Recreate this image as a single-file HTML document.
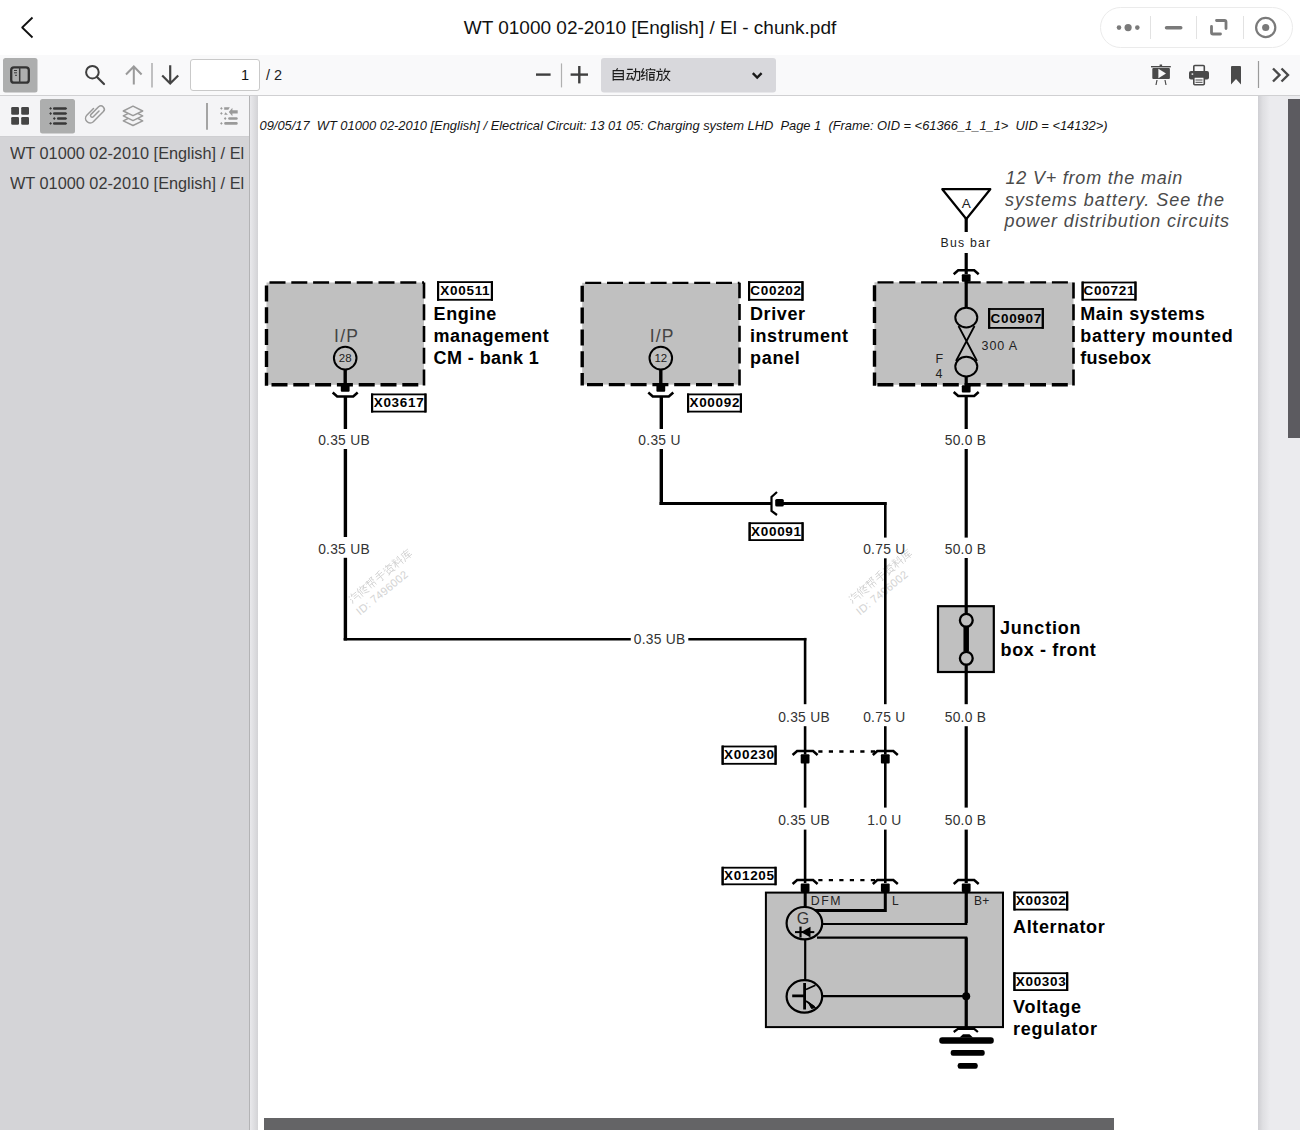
<!DOCTYPE html>
<html><head><meta charset="utf-8">
<style>
*{margin:0;padding:0;box-sizing:border-box}
html,body{width:1300px;height:1130px;overflow:hidden;background:#fff;font-family:"Liberation Sans",sans-serif}
.abs{position:absolute}
#topbar{left:0;top:0;width:1300px;height:55px;background:#fff}
#title{left:0;top:0;width:1300px;height:55px;line-height:55px;text-align:center;font-size:19px;color:#111}
#toolbar{left:0;top:55px;width:1300px;height:41px;background:#f9f9fa;border-bottom:1px solid #d0d0d2}
#sidebar{left:0;top:96px;width:250px;height:1034px;background:#d4d4d7}
#sbtool{left:0;top:96px;width:249px;height:41px;background:#f4f4f6;border-bottom:1px solid #cfcfd2}
#sbborder{left:249px;top:96px;width:1px;height:1034px;background:#b3b3b5}
#viewer{left:250px;top:96px;width:1050px;height:1034px;background:#ebebee}
#lstrip{left:250px;top:96px;width:8px;height:1034px;background:linear-gradient(to right,#e9e9ec,#d3d3d6)}
#rstrip{left:1258px;top:96px;width:12px;height:1034px;background:linear-gradient(to right,#cfcfd3,#dfdfe2 40%,#ebebee)}
#page{left:258px;top:96px;width:1000px;height:1034px;background:#fff}
.outline{left:10px;font-size:16.3px;color:#3a3a3a;white-space:nowrap;width:234px;overflow:hidden}
</style></head><body>
<div class="abs" id="topbar"></div>
<div class="abs" id="title">WT 01000 02-2010 [English] / El - chunk.pdf</div>
<div class="abs" id="toolbar"></div>
<div class="abs" id="viewer"></div>
<div class="abs" id="lstrip"></div><div class="abs" id="rstrip"></div>
<div class="abs" id="page"></div>
<div class="abs" id="sidebar"></div>
<div class="abs" id="sbtool"></div>
<div class="abs" id="sbborder"></div>
<div class="abs outline" style="top:144px">WT 01000 02-2010 [English] / El</div>
<div class="abs outline" style="top:174px">WT 01000 02-2010 [English] / El</div>
<!-- UI icons svg -->
<svg class="abs" style="left:0;top:0" width="1300" height="140" viewBox="0 0 1300 140">
  <!-- back arrow -->
  <path d="M32.5 17.5 L22.2 27.5 L32.5 37.5" fill="none" stroke="#111" stroke-width="1.8" stroke-linejoin="round"/>
  <!-- capsule -->
  <rect x="1100.5" y="7.5" width="192" height="40" rx="20" fill="#fff" stroke="#ebebeb"/>
  <line x1="1150.5" y1="16" x2="1150.5" y2="39" stroke="#e2e2e2"/>
  <line x1="1196.5" y1="16" x2="1196.5" y2="39" stroke="#e2e2e2"/>
  <line x1="1243.5" y1="16" x2="1243.5" y2="39" stroke="#e2e2e2"/>
  <circle cx="1119" cy="27.6" r="2.3" fill="#7a7a7a"/>
  <circle cx="1128.1" cy="27.6" r="3.6" fill="#7a7a7a"/>
  <circle cx="1137.3" cy="27.6" r="2.3" fill="#7a7a7a"/>
  <line x1="1166.5" y1="27.7" x2="1180.8" y2="27.7" stroke="#7a7a7a" stroke-width="3.4" stroke-linecap="round"/>
  <path d="M1216.5 20.5 H1224.5 a1.5 1.5 0 0 1 1.5 1.5 V28.5 M1211.5 26.5 V32.5 a1.5 1.5 0 0 0 1.5 1.5 H1220.5" fill="none" stroke="#7a7a7a" stroke-width="2.8" stroke-linecap="round"/>
  <circle cx="1265.7" cy="27.5" r="9.6" fill="none" stroke="#7a7a7a" stroke-width="2.2"/>
  <circle cx="1265.7" cy="27.5" r="3.6" fill="#7a7a7a"/>
  <!-- sidebar toggle -->
  <rect x="3" y="58" width="34.5" height="34.5" rx="2.5" fill="#adaeae"/>
  <rect x="11.2" y="67.3" width="17.6" height="15.4" rx="2.8" fill="none" stroke="#333" stroke-width="2.3"/>
  <line x1="19.7" y1="67" x2="19.7" y2="83" stroke="#3a3a3a" stroke-width="1.5"/>
  <line x1="14" y1="70.5" x2="17" y2="70.5" stroke="#3a3a3a" stroke-width="1"/>
  <line x1="14" y1="72.8" x2="17" y2="72.8" stroke="#3a3a3a" stroke-width="1"/>
  <line x1="15" y1="75.3" x2="17" y2="75.3" stroke="#3a3a3a" stroke-width="1"/>
  <!-- search -->
  <circle cx="92.4" cy="72.2" r="6.3" fill="none" stroke="#3f3f3f" stroke-width="2"/>
  <line x1="97" y1="77" x2="104" y2="84" stroke="#3f3f3f" stroke-width="2.2" stroke-linecap="round"/>
  <!-- up arrow -->
  <path d="M133.8 84.5 V66.5 M126 74.5 L133.8 66.5 L141.6 74.5" fill="none" stroke="#9a9a9a" stroke-width="2"/>
  <line x1="152" y1="63" x2="152" y2="87.5" stroke="#a8a8a8" stroke-width="1.4"/>
  <path d="M170.2 65.2 V83.5 M162.2 75.5 L170.2 83.5 L178.2 75.5" fill="none" stroke="#444" stroke-width="2.2"/>
  <!-- page input -->
  <rect x="190.5" y="59.5" width="69" height="31" rx="2.5" fill="#fff" stroke="#c9c9c9"/>
  <text x="249" y="80" font-size="14.5" text-anchor="end" fill="#111">1</text>
  <text x="266" y="80" font-size="14.5" fill="#222">/ 2</text>
  <!-- zoom -->
  <line x1="536" y1="74.6" x2="550.6" y2="74.6" stroke="#3f3f3f" stroke-width="2.4"/>
  <line x1="561.5" y1="63.4" x2="561.5" y2="87.4" stroke="#b0b0b0" stroke-width="1.2"/>
  <line x1="570.6" y1="74.6" x2="588" y2="74.6" stroke="#3f3f3f" stroke-width="2.4"/>
  <line x1="579.3" y1="66" x2="579.3" y2="83.4" stroke="#3f3f3f" stroke-width="2.4"/>
  <rect x="601" y="58" width="175" height="34.6" rx="3" fill="#d8d8dc"/>
  <g fill="none" stroke="#1c1c1c" stroke-width="1.15" stroke-linecap="butt" stroke-linejoin="miter">
   <path d="M617.6 68.3 L616.5 70.2 M613.2 80.8 V70.6 H623.3 V80.5 M613.2 73.6 H623.3 M613.2 76.6 H623.3 M613.2 79.6 H623.3"/>
   <path d="M627.2 69.4 H632.8 M626.6 73.5 H633.3 M629.4 73.6 L627 79.2 L633.2 78.5 M631.1 75.8 L633 79.9 M635.6 68.2 V73.5 Q635.3 78.5 632.7 80.6 M633.4 71.6 H639.6 V79.2 Q639.6 80.4 638.4 80.4 H636.6"/>
   <path d="M643.6 68.3 L641.6 72.1 H644.1 L641.4 76.3 L645.8 75.2 M641.3 79.6 L644.6 78.3 M650.3 68.2 L650.6 69.4 M646.4 71 V69.7 H654.8 V71 M647.5 71.3 L645.9 73.8 M646.9 73 V80.8 M649.2 72.5 H655 M649.7 80.6 V74.3 H653.9 V80.6 M649.7 77.3 H653.9 M649.7 80.1 H653.9"/>
   <path d="M660 68.6 L660.6 69.9 M656.3 71.3 H662.6 M658.6 71.3 V75.5 Q658.2 78.8 656.4 80.7 M658.6 74.3 H661.9 V79.4 Q661.9 80.3 660.9 80.3 H659.4 M665.4 68.4 L663.6 73.6 M664.2 71.3 H670.3 M668.6 71.4 Q667 77.5 663.1 80.6 M665 75.3 Q667.2 78.8 670.1 80.7"/>
  </g>
  <path d="M752.8 73.2 L757.2 77.6 L761.6 73.2" fill="none" stroke="#1a1a1a" stroke-width="2.4"/>
  <!-- right icons -->
  <rect x="1151" y="66" width="19.8" height="1.4" fill="#4a4a4a"/>
  <rect x="1159.6" y="64.5" width="2.5" height="2" fill="#4a4a4a"/>
  <rect x="1152.3" y="68" width="17.6" height="11" rx="1" fill="#4a4a4a"/>
  <path d="M1158.4 68.8 L1166 73.5 L1158.4 78.2 Z" fill="#f9f9fa"/>
  <path d="M1157 80 L1156 85 M1165 80 L1166 85" stroke="#4a4a4a" stroke-width="1.2"/>
  <rect x="1193.8" y="65.5" width="10.5" height="7" rx="1" fill="none" stroke="#4a4a4a" stroke-width="1.6"/>
  <rect x="1189" y="71" width="20" height="8.6" rx="2" fill="#4a4a4a"/>
  <rect x="1193.8" y="77" width="10.5" height="7.8" rx="1" fill="#f9f9fa" stroke="#4a4a4a" stroke-width="1.6"/>
  <rect x="1191.6" y="73.4" width="1.6" height="1.4" fill="#f9f9fa"/>
  <line x1="1195.5" y1="80" x2="1202.5" y2="80" stroke="#4a4a4a" stroke-width="1"/>
  <line x1="1195.5" y1="82.3" x2="1202.5" y2="82.3" stroke="#4a4a4a" stroke-width="1"/>
  <path d="M1231 67 a1 1 0 0 1 1 -1 H1240 a1 1 0 0 1 1 1 V84.5 L1236 79 L1231 84.5 Z" fill="#4a4a4a"/>
  <line x1="1258.5" y1="61" x2="1258.5" y2="88" stroke="#9a9a9a" stroke-width="1.2"/>
  <path d="M1273 68.5 L1279.5 75 L1273 81.5 M1281.5 68.5 L1288 75 L1281.5 81.5" fill="none" stroke="#4a4a4a" stroke-width="2.4"/>
  <!-- sidebar toolbar -->
  <rect x="40" y="99" width="35" height="34.6" rx="2.5" fill="#adaeae"/>
  <rect x="11.2" y="107" width="7.8" height="7.8" rx="1.3" fill="#444"/>
  <rect x="21.2" y="107" width="7.8" height="7.8" rx="1.3" fill="#444"/>
  <rect x="11.2" y="117" width="7.8" height="7.8" rx="1.3" fill="#444"/>
  <rect x="21.2" y="117" width="7.8" height="7.8" rx="1.3" fill="#444"/>
  <g fill="#383838">
   <path d="M50.6 107 l1.4 1.4 l-1.4 1.4 l-1.4 -1.4 Z"/><path d="M50.6 112.1 l1.4 1.4 l-1.4 1.4 l-1.4 -1.4 Z"/><path d="M54.3 117.1 l1.4 1.4 l-1.4 1.4 l-1.4 -1.4 Z"/><path d="M50.6 122 l1.4 1.4 l-1.4 1.4 l-1.4 -1.4 Z"/>
   <path d="M54.2 107.2 H66 L67.2 108.4 L66 109.7 H54.2 a1.25 1.25 0 0 1 0 -2.5 Z"/>
   <path d="M54.2 112.3 H66 L67.2 113.5 L66 114.8 H54.2 a1.25 1.25 0 0 1 0 -2.5 Z"/>
   <path d="M58.2 117.3 H66 L67.2 118.5 L66 119.8 H58.2 a1.25 1.25 0 0 1 0 -2.5 Z"/>
   <path d="M54.2 122.2 H66 L67.2 123.4 L66 124.7 H54.2 a1.25 1.25 0 0 1 0 -2.5 Z"/>
  </g>
  <path d="M93.5 108.5 L86.8 115.2 a4.6 4.6 0 0 0 6.5 6.5 L103.4 111.6 a3.4 3.4 0 0 0 -4.8 -4.8 L91 114.4 a1.6 1.6 0 0 0 2.3 2.3 L99 111" fill="none" stroke="#9a9a9a" stroke-width="1.5" stroke-linecap="round"/>
  <g fill="#f4f4f6" stroke="#9a9a9a" stroke-width="1.5" stroke-linejoin="round">
   <path d="M133 116 L142.7 120.8 L133 125.5 L123.3 120.8 Z"/>
   <path d="M133 111.1 L142.7 115.9 L133 120.6 L123.3 115.9 Z"/>
   <path d="M133 106.2 L142.7 111 L133 115.7 L123.3 111 Z"/>
  </g>
  <line x1="207" y1="103" x2="207" y2="129.7" stroke="#a0a0a0" stroke-width="1.9"/>
  <g fill="#9a9a9a">
   <path d="M221.4 107 l1.3 1.4 l-1.3 1.4 l-1.3 -1.4 Z"/><path d="M221.4 112 l1.3 1.4 l-1.3 1.4 l-1.3 -1.4 Z"/><path d="M225.2 117.1 l1.3 1.4 l-1.3 1.4 l-1.3 -1.4 Z"/><path d="M221.4 122 l1.3 1.4 l-1.3 1.4 l-1.3 -1.4 Z"/>
   <path d="M224.2 107.2 H229.8 L228.3 109.8 H224.2 Z"/>
   <path d="M224.2 114.7 L225.5 112.2 L227.9 114.7 Z"/>
   <path d="M228.8 112 L232.4 107.7 V110.3 H237.7 V113.6 H232.4 V116.3 Z"/>
   <rect x="228.2" y="117.2" width="9.5" height="2.6" rx="1.2"/>
   <rect x="224.2" y="122.1" width="13.5" height="2.6" rx="1.2"/>
  </g>
</svg>
<!-- DIAGRAM -->
<svg class="abs" style="left:0;top:0" width="1300" height="1130" viewBox="0 0 1300 1130" font-family="'Liberation Sans', sans-serif">
<text x="259.5" y="129.7" font-size="12.9" text-anchor="start" font-weight="normal" font-style="italic" letter-spacing="0" fill="#151515" textLength="848" lengthAdjust="spacing">09/05/17&#160; WT 01000 02-2010 [English] / Electrical Circuit: 13 01 05: Charging system LHD&#160; Page 1&#160; (Frame: OID = &lt;61366_1_1_1&gt;&#160; UID = &lt;14132&gt;)</text>
<g transform="translate(353.5 604.5) rotate(-39.3)"><g fill="none" stroke="#d3d3d3" stroke-width="0.9"><path transform="translate(0.0 0)" d="M1 -9 L2 -8 M0.5 -6 L1.5 -5 M0 -1 L2 -4 M5 -10 L3.5 -7 M4 -8 H10 M5 -6 H9 M4 -4 H9.5 V0"/><path transform="translate(11.2 0)" d="M2 -10 L0 -6 M1.2 -7 V0 M3 -8 V-2 M5 -10 L4 -7 M4.5 -8.5 H10 M9 -8.5 L5 -5 M6 -7 L10 -5 M5 -4 L9 -3 M4.5 -2 L9.5 0"/><path transform="translate(22.4 0)" d="M0 -9 H5 M0 -7.5 H5 M2.5 -10 L2 -5 M6 -10 V-5 M6 -10 H9 L7.5 -7.5 L9 -6 M2 -5 V-1 M2 -4.5 H8 V-1 M5 -5 V0"/><path transform="translate(33.6 0)" d="M8 -10 L2 -9 M1 -7 H9 M0 -4.5 H10 M5 -9 V0 L3.5 -0.5"/><path transform="translate(44.8 0)" d="M0.5 -9 L1.5 -8 M0 -6 L2 -7 M5 -10 L3.5 -8 M4 -8.5 H9.5 M7 -8.5 L4 -6 M7 -7.5 L10 -6 M2 -5 H8 V-1.5 H2 Z M5 -4 V-2 M4 -1.5 L1 0 M6 -1.5 L9.5 0"/><path transform="translate(56.0 0)" d="M1 -9.5 L1.5 -8.5 M4 -9.5 L3.5 -8.5 M0 -7 H5 M2.5 -10 V0 M2.5 -6.5 L0 -2 M2.5 -6.5 L5 -3 M6.5 -9 L7.5 -8 M6 -7 L7 -6 M5.5 -3.5 L10 -4.5 M8.5 -10 V0"/><path transform="translate(67.2 0)" d="M5 -10 L5.5 -9 M1 -8.5 H10 M1.5 -8.5 V-3 L0 0 M3 -6.5 H9 M5 -7.5 L3.5 -4 H9 M2.5 -2 H10 M6.5 -5.5 V0"/></g><text x="-2" y="12.8" font-size="11" fill="#d3d3d3" letter-spacing="0.3">ID: 7496002</text></g>
<g transform="translate(853.5 604.5) rotate(-39.3)"><g fill="none" stroke="#d3d3d3" stroke-width="0.9"><path transform="translate(0.0 0)" d="M1 -9 L2 -8 M0.5 -6 L1.5 -5 M0 -1 L2 -4 M5 -10 L3.5 -7 M4 -8 H10 M5 -6 H9 M4 -4 H9.5 V0"/><path transform="translate(11.2 0)" d="M2 -10 L0 -6 M1.2 -7 V0 M3 -8 V-2 M5 -10 L4 -7 M4.5 -8.5 H10 M9 -8.5 L5 -5 M6 -7 L10 -5 M5 -4 L9 -3 M4.5 -2 L9.5 0"/><path transform="translate(22.4 0)" d="M0 -9 H5 M0 -7.5 H5 M2.5 -10 L2 -5 M6 -10 V-5 M6 -10 H9 L7.5 -7.5 L9 -6 M2 -5 V-1 M2 -4.5 H8 V-1 M5 -5 V0"/><path transform="translate(33.6 0)" d="M8 -10 L2 -9 M1 -7 H9 M0 -4.5 H10 M5 -9 V0 L3.5 -0.5"/><path transform="translate(44.8 0)" d="M0.5 -9 L1.5 -8 M0 -6 L2 -7 M5 -10 L3.5 -8 M4 -8.5 H9.5 M7 -8.5 L4 -6 M7 -7.5 L10 -6 M2 -5 H8 V-1.5 H2 Z M5 -4 V-2 M4 -1.5 L1 0 M6 -1.5 L9.5 0"/><path transform="translate(56.0 0)" d="M1 -9.5 L1.5 -8.5 M4 -9.5 L3.5 -8.5 M0 -7 H5 M2.5 -10 V0 M2.5 -6.5 L0 -2 M2.5 -6.5 L5 -3 M6.5 -9 L7.5 -8 M6 -7 L7 -6 M5.5 -3.5 L10 -4.5 M8.5 -10 V0"/><path transform="translate(67.2 0)" d="M5 -10 L5.5 -9 M1 -8.5 H10 M1.5 -8.5 V-3 L0 0 M3 -6.5 H9 M5 -7.5 L3.5 -4 H9 M2.5 -2 H10 M6.5 -5.5 V0"/></g><text x="-2" y="12.8" font-size="11" fill="#d3d3d3" letter-spacing="0.3">ID: 7496002</text></g>
<rect x="266.5" y="282.5" width="157.5" height="102.30000000000001" fill="#c0c0c0"/>
<path d="M269.5 282.5 H424" stroke="#000" stroke-width="2.3" stroke-dasharray="16 5.8"/>
<path d="M266.5 285.5 V385.8" stroke="#000" stroke-width="3.4" stroke-dasharray="16 5.8"/>
<path d="M424 385.6 V282.5" stroke="#000" stroke-width="2.6" stroke-dasharray="16 5.8"/>
<path d="M422.5 384.8 H266.5" stroke="#000" stroke-width="3.4" stroke-dasharray="16 5.8" stroke-dashoffset="-4.2"/>
<rect x="582.2" y="282.8" width="157.29999999999995" height="101.80000000000001" fill="#c0c0c0"/>
<path d="M585.2 282.8 H739.5" stroke="#000" stroke-width="2.3" stroke-dasharray="16 5.8"/>
<path d="M582.2 285.8 V385.6" stroke="#000" stroke-width="3.4" stroke-dasharray="16 5.8"/>
<path d="M739.5 385.40000000000003 V282.8" stroke="#000" stroke-width="2.6" stroke-dasharray="16 5.8"/>
<path d="M738.0 384.6 H582.2" stroke="#000" stroke-width="3.4" stroke-dasharray="16 5.8" stroke-dashoffset="-4.2"/>
<rect x="874.5" y="282.3" width="199.0" height="102.5" fill="#c0c0c0"/>
<path d="M877.5 282.3 H1073.5" stroke="#000" stroke-width="2.3" stroke-dasharray="16 5.8"/>
<path d="M874.5 285.3 V385.8" stroke="#000" stroke-width="3.4" stroke-dasharray="16 5.8"/>
<path d="M1073.5 385.6 V282.3" stroke="#000" stroke-width="2.6" stroke-dasharray="16 5.8"/>
<path d="M1072.0 384.8 H874.5" stroke="#000" stroke-width="3.4" stroke-dasharray="16 5.8" stroke-dashoffset="-4.2"/>
<rect x="437.9" y="282.09999999999997" width="54.2" height="17.7" fill="#fff" stroke="#000" stroke-width="1.8"/>
<path d="M438.1 281.2 V300.7 M491.9 281.2 V300.7" stroke="#000" stroke-width="2.2"/>
<text x="465.3" y="295.3" font-size="13.5" text-anchor="middle" font-weight="bold" font-style="normal" letter-spacing="0.7" fill="#000" >X00511</text>
<rect x="748.9" y="282.09999999999997" width="53.7" height="17.7" fill="#fff" stroke="#000" stroke-width="1.8"/>
<path d="M749.1 281.2 V300.7 M802.4 281.2 V300.7" stroke="#000" stroke-width="2.2"/>
<text x="776.05" y="295.3" font-size="13.5" text-anchor="middle" font-weight="bold" font-style="normal" letter-spacing="0.7" fill="#000" >C00202</text>
<rect x="1082.5" y="282.5" width="53.100000000000094" height="17.2" fill="#fff" stroke="#000" stroke-width="1.8"/>
<path d="M1082.6999999999998 281.6 V300.6 M1135.4 281.6 V300.6" stroke="#000" stroke-width="2.2"/>
<text x="1109.35" y="295.20000000000005" font-size="13.5" text-anchor="middle" font-weight="bold" font-style="normal" letter-spacing="0.7" fill="#000" >C00721</text>
<text x="433.6" y="320.0" font-size="18" text-anchor="start" font-weight="bold" font-style="normal" letter-spacing="0.54" fill="#000" >Engine</text>
<text x="433.6" y="341.75" font-size="18" text-anchor="start" font-weight="bold" font-style="normal" letter-spacing="0.467" fill="#000" >management</text>
<text x="433.6" y="363.5" font-size="18" text-anchor="start" font-weight="bold" font-style="normal" letter-spacing="0.42" fill="#000" >CM - bank 1</text>
<text x="750" y="320.0" font-size="18" text-anchor="start" font-weight="bold" font-style="normal" letter-spacing="0.6" fill="#000" >Driver</text>
<text x="750" y="341.75" font-size="18" text-anchor="start" font-weight="bold" font-style="normal" letter-spacing="0.556" fill="#000" >instrument</text>
<text x="750" y="363.5" font-size="18" text-anchor="start" font-weight="bold" font-style="normal" letter-spacing="0.7" fill="#000" >panel</text>
<text x="1080.3" y="320.0" font-size="18" text-anchor="start" font-weight="bold" font-style="normal" letter-spacing="0.573" fill="#000" >Main systems</text>
<text x="1080.3" y="341.75" font-size="18" text-anchor="start" font-weight="bold" font-style="normal" letter-spacing="0.814" fill="#000" >battery mounted</text>
<text x="1080.3" y="363.5" font-size="18" text-anchor="start" font-weight="bold" font-style="normal" letter-spacing="0.267" fill="#000" >fusebox</text>
<text x="346.59999999999997" y="341.7" font-size="17.5" text-anchor="middle" font-weight="normal" font-style="normal" letter-spacing="1.2" fill="#444" >I/P</text>
<circle cx="345.2" cy="358.1" r="11.3" fill="none" stroke="#000" stroke-width="2"/>
<text x="345.2" y="361.8" font-size="11.5" text-anchor="middle" font-weight="normal" font-style="normal" letter-spacing="0" fill="#222" >28</text>
<line x1="345.2" y1="369.4" x2="345.2" y2="384" stroke="#000" stroke-width="3.4" />
<rect x="340.8" y="384.4" width="8.8" height="7.400000000000034" rx="1" fill="#000"/>
<path d="M332.7 392.5 L337.2 396.5 H353.2 L357.7 392.5" fill="none" stroke="#000" stroke-width="2.5"/>
<text x="662.1999999999999" y="341.7" font-size="17.5" text-anchor="middle" font-weight="normal" font-style="normal" letter-spacing="1.2" fill="#444" >I/P</text>
<circle cx="660.8" cy="358.1" r="11.3" fill="none" stroke="#000" stroke-width="2"/>
<text x="660.8" y="361.8" font-size="11.5" text-anchor="middle" font-weight="normal" font-style="normal" letter-spacing="0" fill="#222" >12</text>
<line x1="660.8" y1="369.4" x2="660.8" y2="384" stroke="#000" stroke-width="3.4" />
<rect x="656.4" y="384.4" width="8.8" height="7.400000000000034" rx="1" fill="#000"/>
<path d="M648.3 392.5 L652.8 396.5 H668.8 L673.3 392.5" fill="none" stroke="#000" stroke-width="2.5"/>
<rect x="371.9" y="394.4" width="53.7" height="17.2" fill="#fff" stroke="#000" stroke-width="1.8"/>
<path d="M372.1 393.5 V412.5 M425.4 393.5 V412.5" stroke="#000" stroke-width="2.2"/>
<text x="399.05" y="407.1" font-size="13.5" text-anchor="middle" font-weight="bold" font-style="normal" letter-spacing="0.7" fill="#000" >X03617</text>
<rect x="687.9" y="394.4" width="53.2" height="17.2" fill="#fff" stroke="#000" stroke-width="1.8"/>
<path d="M688.1 393.5 V412.5 M740.9 393.5 V412.5" stroke="#000" stroke-width="2.2"/>
<text x="714.8" y="407.1" font-size="13.5" text-anchor="middle" font-weight="bold" font-style="normal" letter-spacing="0.7" fill="#000" >X00092</text>
<line x1="345.4" y1="397" x2="345.4" y2="429" stroke="#000" stroke-width="3.4" />
<text x="344" y="444.5" font-size="13.8" text-anchor="middle" font-weight="normal" font-style="normal" letter-spacing="0.27" fill="#333" >0.35 UB</text>
<line x1="345.4" y1="449" x2="345.4" y2="537" stroke="#000" stroke-width="3.4" />
<text x="344" y="553.6" font-size="13.8" text-anchor="middle" font-weight="normal" font-style="normal" letter-spacing="0.27" fill="#333" >0.35 UB</text>
<line x1="345.4" y1="557.8" x2="345.4" y2="640.5" stroke="#000" stroke-width="3.4" />
<line x1="343.7" y1="639.2" x2="630.8" y2="639.2" stroke="#000" stroke-width="2.6" />
<text x="659.7" y="643.8" font-size="13.8" text-anchor="middle" font-weight="normal" font-style="normal" letter-spacing="0.27" fill="#333" >0.35 UB</text>
<line x1="688.3" y1="639.2" x2="806.4" y2="639.2" stroke="#000" stroke-width="2.6" />
<line x1="805.1" y1="637.9" x2="805.1" y2="704.2" stroke="#000" stroke-width="2.6" />
<text x="804" y="721.8" font-size="13.8" text-anchor="middle" font-weight="normal" font-style="normal" letter-spacing="0.27" fill="#333" >0.35 UB</text>
<line x1="805.1" y1="726.2" x2="805.1" y2="754.5" stroke="#000" stroke-width="2.6" />
<line x1="661.3" y1="397" x2="661.3" y2="429" stroke="#000" stroke-width="3.4" />
<text x="659.5" y="444.5" font-size="13.8" text-anchor="middle" font-weight="normal" font-style="normal" letter-spacing="0.27" fill="#333" >0.35 U</text>
<line x1="661.3" y1="449" x2="661.3" y2="505" stroke="#000" stroke-width="3.4" />
<line x1="659.6" y1="503.6" x2="771" y2="503.6" stroke="#000" stroke-width="3" />
<path d="M777 492 L771.5 497 V511 L777 515" fill="none" stroke="#000" stroke-width="2.2"/>
<rect x="775.2" y="499" width="8.6" height="7.5" rx="1.5" fill="#000"/>
<line x1="783" y1="503.6" x2="886.6" y2="503.6" stroke="#000" stroke-width="3" />
<line x1="885.3" y1="502.2" x2="885.3" y2="537.6" stroke="#000" stroke-width="2.6" />
<text x="884.3" y="553.6" font-size="13.8" text-anchor="middle" font-weight="normal" font-style="normal" letter-spacing="0.27" fill="#333" >0.75 U</text>
<line x1="885.3" y1="558.3" x2="885.3" y2="704.2" stroke="#000" stroke-width="2.6" />
<text x="884.3" y="721.8" font-size="13.8" text-anchor="middle" font-weight="normal" font-style="normal" letter-spacing="0.27" fill="#333" >0.75 U</text>
<line x1="885.3" y1="726.2" x2="885.3" y2="754.5" stroke="#000" stroke-width="2.6" />
<rect x="749.5" y="523.1999999999999" width="53.2" height="16.900000000000045" fill="#fff" stroke="#000" stroke-width="1.8"/>
<path d="M749.7 522.3 V541 M802.5 522.3 V541" stroke="#000" stroke-width="2.2"/>
<text x="776.4" y="535.6" font-size="13.5" text-anchor="middle" font-weight="bold" font-style="normal" letter-spacing="0.7" fill="#000" >X00091</text>
<path d="M942.3 189.2 H990.3 L966.3 219 Z" fill="#fff" stroke="#000" stroke-width="2.2" stroke-linejoin="round"/>
<text x="966.3" y="208.3" font-size="13.5" text-anchor="middle" font-weight="normal" font-style="normal" letter-spacing="0" fill="#222" >A</text>
<line x1="966.2" y1="218" x2="966.2" y2="232" stroke="#000" stroke-width="3.2" />
<text x="966" y="247" font-size="12.3" text-anchor="middle" font-weight="normal" font-style="normal" letter-spacing="1.2" fill="#222" >Bus bar</text>
<line x1="966.2" y1="253" x2="966.2" y2="274" stroke="#000" stroke-width="3.2" />
<path d="M953.7 274.2 L958.2 270.2 H974.2 L978.7 274.2" fill="none" stroke="#000" stroke-width="2.5"/>
<rect x="961.8000000000001" y="274.3" width="8.8" height="7.399999999999977" rx="1" fill="#000"/>
<line x1="966.2" y1="281" x2="966.2" y2="307.5" stroke="#000" stroke-width="3.2" />
<ellipse cx="966.3" cy="317.6" rx="11" ry="9.8" fill="none" stroke="#000" stroke-width="2"/>
<ellipse cx="966.3" cy="366.6" rx="11" ry="9.8" fill="none" stroke="#000" stroke-width="2"/>
<path d="M958.5 326 L977 361 M974.5 326 L956 361" fill="none" stroke="#000" stroke-width="1.8"/>
<line x1="966.2" y1="376" x2="966.2" y2="385" stroke="#000" stroke-width="3.2" />
<rect x="961.8000000000001" y="385.2" width="8.8" height="7.400000000000034" rx="1" fill="#000"/>
<path d="M953.7 392 L958.2 396 H974.2 L978.7 392" fill="none" stroke="#000" stroke-width="2.5"/>
<rect x="989.0" y="309.0" width="53.899999999999935" height="18.899999999999988" fill="#c0c0c0" stroke="#000" stroke-width="1.8"/>
<path d="M989.2 308.1 V328.8 M1042.7 308.1 V328.8" stroke="#000" stroke-width="2.2"/>
<text x="1016.25" y="323.40000000000003" font-size="13.5" text-anchor="middle" font-weight="bold" font-style="normal" letter-spacing="0.7" fill="#000" >C00907</text>
<text x="999.8" y="349.5" font-size="12.5" text-anchor="middle" font-weight="normal" font-style="normal" letter-spacing="0.9" fill="#222" >300 A</text>
<text x="935.6" y="362.6" font-size="12.5" text-anchor="start" font-weight="normal" font-style="normal" letter-spacing="0" fill="#222" >F</text>
<text x="935.6" y="378.3" font-size="12.5" text-anchor="start" font-weight="normal" font-style="normal" letter-spacing="0" fill="#222" >4</text>
<line x1="966.2" y1="397" x2="966.2" y2="429" stroke="#000" stroke-width="3.2" />
<text x="965.5" y="444.7" font-size="13.8" text-anchor="middle" font-weight="normal" font-style="normal" letter-spacing="0.27" fill="#333" >50.0 B</text>
<line x1="966.2" y1="449" x2="966.2" y2="537.6" stroke="#000" stroke-width="3.2" />
<text x="965.5" y="553.6" font-size="13.8" text-anchor="middle" font-weight="normal" font-style="normal" letter-spacing="0.27" fill="#333" >50.0 B</text>
<line x1="966.2" y1="558" x2="966.2" y2="606" stroke="#000" stroke-width="3.2" />
<rect x="938" y="606.2" width="55.8" height="65.8" fill="#c0c0c0" stroke="#000" stroke-width="2.2"/>
<line x1="966.2" y1="606" x2="966.2" y2="613" stroke="#000" stroke-width="3.2" />
<line x1="966.2" y1="627" x2="966.2" y2="651" stroke="#000" stroke-width="5.5" />
<circle cx="966.3" cy="620.3" r="6.4" fill="#c0c0c0" stroke="#000" stroke-width="2.3"/>
<circle cx="966.3" cy="658.3" r="6.4" fill="#c0c0c0" stroke="#000" stroke-width="2.3"/>
<line x1="966.2" y1="664.3" x2="966.2" y2="704.2" stroke="#000" stroke-width="3.2" />
<text x="965.5" y="721.8" font-size="13.8" text-anchor="middle" font-weight="normal" font-style="normal" letter-spacing="0.27" fill="#333" >50.0 B</text>
<line x1="966.2" y1="726.2" x2="966.2" y2="807.6" stroke="#000" stroke-width="3.2" />
<text x="965.5" y="825" font-size="13.8" text-anchor="middle" font-weight="normal" font-style="normal" letter-spacing="0.27" fill="#333" >50.0 B</text>
<line x1="966.2" y1="829.6" x2="966.2" y2="883" stroke="#000" stroke-width="3.2" />
<text x="1000.1" y="633.5" font-size="18" text-anchor="start" font-weight="bold" font-style="normal" letter-spacing="0.757" fill="#000" >Junction</text>
<text x="1000.6" y="655.5" font-size="18" text-anchor="start" font-weight="bold" font-style="normal" letter-spacing="0.62" fill="#000" >box - front</text>
<rect x="722.5" y="746.5" width="53.2" height="17.300000000000022" fill="#fff" stroke="#000" stroke-width="1.8"/>
<path d="M722.7 745.6 V764.7 M775.5 745.6 V764.7" stroke="#000" stroke-width="2.2"/>
<text x="749.4" y="759.3000000000001" font-size="13.5" text-anchor="middle" font-weight="bold" font-style="normal" letter-spacing="0.7" fill="#000" >X00230</text>
<path d="M792.6 755 L797.1 751 H813.1 L817.6 755" fill="none" stroke="#000" stroke-width="2.5"/>
<rect x="800.7" y="754.3" width="8.8" height="9.100000000000023" rx="1" fill="#000"/>
<path d="M872.8 755 L877.3 751 H893.3 L897.8 755" fill="none" stroke="#000" stroke-width="2.5"/>
<rect x="880.9" y="754.3" width="8.8" height="9.100000000000023" rx="1" fill="#000"/>
<path d="M818.3 751.5 H876" fill="none" stroke="#000" stroke-width="2.5" stroke-dasharray="4.2 6.3"/>
<line x1="805.1" y1="763" x2="805.1" y2="807.6" stroke="#000" stroke-width="2.6" />
<text x="804" y="825" font-size="13.8" text-anchor="middle" font-weight="normal" font-style="normal" letter-spacing="0.27" fill="#333" >0.35 UB</text>
<line x1="885.3" y1="763" x2="885.3" y2="807.6" stroke="#000" stroke-width="2.6" />
<text x="884.3" y="825" font-size="13.8" text-anchor="middle" font-weight="normal" font-style="normal" letter-spacing="0.27" fill="#333" >1.0 U</text>
<line x1="805.1" y1="829.6" x2="805.1" y2="883" stroke="#000" stroke-width="2.6" />
<line x1="885.3" y1="829.6" x2="885.3" y2="883" stroke="#000" stroke-width="2.6" />
<rect x="722.5" y="867.6999999999999" width="53.2" height="16.60000000000009" fill="#fff" stroke="#000" stroke-width="1.8"/>
<path d="M722.7 866.8 V885.2 M775.5 866.8 V885.2" stroke="#000" stroke-width="2.2"/>
<text x="749.4" y="879.8000000000001" font-size="13.5" text-anchor="middle" font-weight="bold" font-style="normal" letter-spacing="0.7" fill="#000" >X01205</text>
<path d="M792.6 884 L797.1 880 H813.1 L817.6 884" fill="none" stroke="#000" stroke-width="2.5"/>
<rect x="800.7" y="883.5" width="8.8" height="8.5" rx="1" fill="#000"/>
<path d="M872.8 884 L877.3 880 H893.3 L897.8 884" fill="none" stroke="#000" stroke-width="2.5"/>
<rect x="880.9" y="883.5" width="8.8" height="8.5" rx="1" fill="#000"/>
<path d="M953.7 884 L958.2 880 H974.2 L978.7 884" fill="none" stroke="#000" stroke-width="2.5"/>
<rect x="961.8000000000001" y="883.5" width="8.8" height="8.5" rx="1" fill="#000"/>
<path d="M818.3 880.2 H876" fill="none" stroke="#000" stroke-width="2.2" stroke-dasharray="4.2 6.3"/>
<rect x="765.9" y="892.6" width="237.1" height="134.5" fill="#c0c0c0" stroke="#000" stroke-width="2"/>
<text x="810.8" y="905.3" font-size="12.3" text-anchor="start" font-weight="normal" font-style="normal" letter-spacing="1.5" fill="#222" >DFM</text>
<text x="892" y="905.3" font-size="12" text-anchor="start" font-weight="normal" font-style="normal" letter-spacing="0" fill="#222" >L</text>
<text x="973.9" y="905.3" font-size="12" text-anchor="start" font-weight="normal" font-style="normal" letter-spacing="0.3" fill="#222" >B+</text>
<line x1="805.2" y1="892" x2="805.2" y2="907" stroke="#000" stroke-width="3" />
<path d="M885.3 892 V910.5 H812" fill="none" stroke="#000" stroke-width="3"/>
<path d="M966.2 892 V924 H822" fill="none" stroke="#000" stroke-width="2.2"/>
<line x1="966.2" y1="892" x2="966.2" y2="923" stroke="#000" stroke-width="3.2" />
<path d="M817 937.6 H966.2 V1030" fill="none" stroke="#000" stroke-width="2.2"/>
<line x1="966.2" y1="937.5" x2="966.2" y2="1030" stroke="#000" stroke-width="3.2" />
<ellipse cx="804.4" cy="923.2" rx="17.8" ry="16.2" fill="#c0c0c0" stroke="#000" stroke-width="2.2"/>
<text x="803" y="924.3" font-size="16" text-anchor="middle" font-weight="normal" font-style="normal" letter-spacing="0" fill="#333" >G</text>
<path d="M795 932.1 H814.3" stroke="#000" stroke-width="2"/>
<path d="M801 932.1 L810.5 926.8 V937.6 Z" fill="#000"/>
<path d="M800.5 926.6 V937.5" stroke="#000" stroke-width="2.2"/>
<line x1="805.2" y1="940" x2="805.2" y2="980" stroke="#000" stroke-width="2.2" />
<ellipse cx="804.4" cy="996.4" rx="17.8" ry="16.2" fill="#c0c0c0" stroke="#000" stroke-width="2.2"/>
<path d="M792.2 995.8 H804 M804.6 983 V1009.6" fill="none" stroke="#000" stroke-width="2.8"/>
<path d="M806 989.5 L815.4 985.3 M806 1001 L814.5 1007" fill="none" stroke="#000" stroke-width="1.8"/>
<path d="M815.5 1007.5 L808 1002 L811.5 1008.5 Z" fill="#000" stroke="#000" stroke-width="1"/>
<line x1="822" y1="996.2" x2="966.2" y2="996.2" stroke="#000" stroke-width="2.2" />
<circle cx="966.2" cy="996.2" r="4" fill="#000"/>
<rect x="1014.3" y="892.5" width="53.00000000000007" height="17.099999999999977" fill="#fff" stroke="#000" stroke-width="1.8"/>
<path d="M1014.5 891.6 V910.5 M1067.1000000000001 891.6 V910.5" stroke="#000" stroke-width="2.2"/>
<text x="1041.1" y="905.1" font-size="13.5" text-anchor="middle" font-weight="bold" font-style="normal" letter-spacing="0.7" fill="#000" >X00302</text>
<rect x="1014.3" y="973.1999999999999" width="53.00000000000007" height="16.900000000000045" fill="#fff" stroke="#000" stroke-width="1.8"/>
<path d="M1014.5 972.3 V991 M1067.1000000000001 972.3 V991" stroke="#000" stroke-width="2.2"/>
<text x="1041.1" y="985.6" font-size="13.5" text-anchor="middle" font-weight="bold" font-style="normal" letter-spacing="0.7" fill="#000" >X00303</text>
<text x="1013.1" y="933" font-size="18" text-anchor="start" font-weight="bold" font-style="normal" letter-spacing="0.622" fill="#000" >Alternator</text>
<text x="1013.1" y="1012.6" font-size="18" text-anchor="start" font-weight="bold" font-style="normal" letter-spacing="0.7" fill="#000" >Voltage</text>
<text x="1013.1" y="1034.6" font-size="18" text-anchor="start" font-weight="bold" font-style="normal" letter-spacing="0.75" fill="#000" >regulator</text>
<path d="M953.7 1032 L958 1028.8 H974.2 L977.9 1032" fill="none" stroke="#000" stroke-width="2.2"/>
<path d="M959.5 1037.5 L963 1034.3 H969.5 L973 1037.5 Z" fill="#000"/>
<rect x="939.2" y="1037.2" width="54.6" height="6.5" rx="3" fill="#000"/>
<rect x="950.7" y="1049.9" width="34" height="5.9" rx="2.2" fill="#000"/>
<rect x="957.7" y="1063" width="20" height="5.7" rx="2.2" fill="#000"/>
<text x="1005.5" y="184.0" font-size="18" text-anchor="start" font-weight="normal" font-style="italic" letter-spacing="0.79" fill="#4a4a4a" >12 V+ from the main</text>
<text x="1005" y="205.6" font-size="18" text-anchor="start" font-weight="normal" font-style="italic" letter-spacing="0.97" fill="#4a4a4a" >systems battery.&#160;See the</text>
<text x="1004.6" y="227.2" font-size="18" text-anchor="start" font-weight="normal" font-style="italic" letter-spacing="0.86" fill="#4a4a4a" >power distribution circuits</text>
</svg>
<!-- /DIAGRAM -->
<!-- scrollbars -->
<div class="abs" style="left:1288px;top:99px;width:12px;height:339px;background:#5c5b60"></div>
<div class="abs" style="left:264px;top:1118px;width:850px;height:12px;background:#646466"></div>
</body></html>
